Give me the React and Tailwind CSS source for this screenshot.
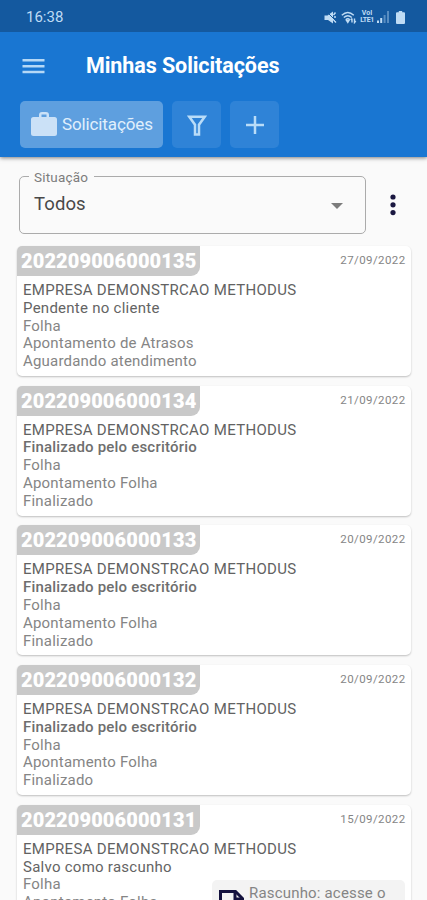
const requests = [
  { id: '202209006000135', date: '27/09/2022', status: 'Pendente no cliente', type: 'Apontamento de Atrasos', step: 'Aguardando atendimento' },
  { id: '202209006000134', date: '21/09/2022', status: 'Finalizado pelo escritório', bold: true, type: 'Apontamento Folha', step: 'Finalizado' },
  { id: '202209006000133', date: '20/09/2022', status: 'Finalizado pelo escritório', bold: true, type: 'Apontamento Folha', step: 'Finalizado' },
  { id: '202209006000132', date: '20/09/2022', status: 'Finalizado pelo escritório', bold: true, type: 'Apontamento Folha', step: 'Finalizado' },
  { id: '202209006000131', date: '15/09/2022', status: 'Salvo como rascunho', type: 'Apontamento Folha', step: 'Rascunho', draft: true },
];

function StatusBar() {
  return (
    <div className="flex h-8 items-center bg-[#14599f] pl-[26px] pr-[22px] pt-0.5 text-[#bfdcf5]">
      <span className="text-[15px]">16:38</span>
      <div className="ml-auto flex items-center">
        <svg className="h-[13px] w-[13px]" viewBox="0 0 13 13" fill="currentColor">
          <path d="M0.500 4.500h3L9 .500v12L4 9h-3.500z" />
          <path d="M8 7l4 4.500M9.500 4l2-2.500M10 6h2" stroke="currentColor" strokeWidth="1.500" />
          <path d="M2.500 .500l10 10" stroke="#14599f" strokeWidth="1" />
        </svg>
        <svg className="ml-1 h-[13px] w-4" viewBox="0 0 16 13" fill="none" stroke="currentColor" strokeWidth="1.400">
          <path d="M.800 4.200q6-5.500 12 0M2.800 6.500q4-3.500 8 0M4.800 8.700q2-1.800 4 0" />
          <path d="M5.500 9.500h2.500L6.800 11.500zM11 7.500v4M9.800 9L11 7.500M13.500 7.500v4l1.300-1.500" />
        </svg>
        <div className="ml-[2px] w-4 whitespace-nowrap text-center text-[7px] font-bold leading-[7px]">
          <div>VoI</div>
          <div className="tracking-[-0.4px]">LTE1</div>
        </div>
        <svg className="ml-[2px] h-[12px] w-3" viewBox="0 0 12 12" fill="currentColor">
          <path d="M0 9.500h2V12H0zM3.200 7h2v5h-2z" />
          <path d="M6.600 4h2v8h-2zM10 0h2v12h-2z" opacity=".4" />
        </svg>
        <svg className="ml-[7px] h-[13px] w-[9px]" viewBox="0 0 9 13" fill="currentColor">
          <path d="M2.800 0h3.400v1.300H8q1 0 1 1V12q0 1-1 1H1q-1 0-1-1V2.300q0-1 1-1h1.800z" />
        </svg>
      </div>
    </div>
  );
}

function Header() {
  return (
    <header className="relative z-10 h-[157px] bg-[#1976d2] shadow-[0_1px_4px_rgba(0,0,0,0.5)]">
      <StatusBar />
      <div className="flex h-[69px] items-center pl-[22px]">
        <svg className="mb-[2px] h-4 w-[23px]" viewBox="0 0 23 16" fill="#b5d8f6">
          <path d="M.5 1h22v2.500H.5zM.5 6.900h22v2.500H.5zM.5 12.800h22v2.500H.5z" />
        </svg>
        <h1 className="ml-[41px] text-[21.5px] font-bold tracking-[-0.08px] text-white">Minhas Solicitações</h1>
      </div>
      <div className="flex gap-[9px] pl-5">
        <button className="flex h-[47px] w-[143px] items-center rounded-[5px] bg-[#5e9fdf] pl-[11px] text-[#e0effc]">
          <svg className="h-[25px] w-[26px] shrink-0" viewBox="0 0 26 25" fill="#cbe1f7">
            <path fillRule="evenodd" d="M8 5V3q0-3 3-3h4q3 0 3 3v2h5.500Q26 5 26 7.500v14Q26 24 23.500 24h-21Q0 24 0 21.500v-14Q0 5 2.500 5zM10.500 5h5V2.500h-5z" />
          </svg>
          <span className="ml-[5px] text-[17px] tracking-[-0.12px]">Solicitações</span>
        </button>
        <button className="flex h-[47px] w-[49px] items-center justify-center rounded-[5px] bg-[#2f83d7]">
          <svg className="mt-[1px] h-[21px] w-[20px]" viewBox="0 0 20 21" fill="none" stroke="#b9dcf8" strokeWidth="2.5">
            <path d="M2.300 1.700h15.400l-5.700 8v9.800H8V9.700z" />
          </svg>
        </button>
        <button className="flex h-[47px] w-[49px] items-center justify-center rounded-[5px] bg-[#2f83d7]">
          <svg className="mt-[1px] h-[18px] w-[18px]" viewBox="0 0 18 18" stroke="#b9dcf8" strokeWidth="2.5">
            <path d="M0 9h18M9 0v18" />
          </svg>
        </button>
      </div>
    </header>
  );
}

function StatusFilter() {
  return (
    <div className="flex pl-[19px] pt-[19px]">
      <div className="relative flex h-[58px] w-[347px] items-center rounded-[5px] border border-[#ababab] pl-[14px] pr-[22px]">
        <span className="absolute left-[9px] top-[-8px] bg-[#fafafa] px-[5px] pr-[6px] text-[13.5px] leading-4 tracking-[0.2px] text-[#7d7d7d]">Situação</span>
        <span className="text-[18.5px] tracking-[0.1px] text-[#484848]">Todos</span>
        <svg className="ml-auto mt-[2px] h-[6px] w-[12px]" viewBox="0 0 12 6" fill="#7c7c7c"><path d="M0 0h12L6 6z" /></svg>
      </div>
      <svg className="ml-[24px] mt-[18px] h-[22px] w-[6px]" viewBox="0 0 6 22" fill="#1a1740">
        <circle cx="3" cy="3" r="2.6" /><circle cx="3" cy="10.8" r="2.6" /><circle cx="3" cy="18.6" r="2.6" />
      </svg>
    </div>
  );
}

function RequestCard({ request }) {
  return (
    <article className="relative h-[130px] shrink-0 rounded-[5px] bg-white shadow-[0_1px_2px_rgba(0,0,0,0.24)]">
      <div className="flex justify-between">
        <div className="flex h-[30px] w-[183px] items-center rounded-br-[9px] rounded-tl-[5px] bg-[#c9c9c9] pl-[4px] text-[20px] font-black tracking-[0.1px] text-white">{request.id}</div>
        <time className="pr-[5.5px] pt-[6px] text-[11.5px] leading-[17px] tracking-[0.4px] text-[#858585]">{request.date}</time>
      </div>
      <div className="whitespace-nowrap pl-[6px] pt-[6px] text-[15px] leading-[17.8px] tracking-[0.2px] text-[#858585]">
        <p className="tracking-[0.32px] text-[#626262]">EMPRESA DEMONSTRCAO METHODUS</p>
        <p className={request.bold ? 'font-medium tracking-[0.2px] text-[#6e6e6e]' : 'tracking-[0.26px] text-[#646464]'}>{request.status}</p>
        <p>Folha</p>
        <p>{request.type}</p>
        <p>{request.step}</p>
      </div>
      {request.draft && (
        <div className="absolute left-[195px] top-[75px] flex h-[45px] w-[193px] rounded-[5px] bg-[#f3f3f3] pl-[7px] pt-[4px]">
          <svg className="mt-[6px] h-[28px] w-[25px] shrink-0" viewBox="0 0 25 28" fill="none" stroke="#14123e" strokeWidth="3">
            <path d="M1.500 26.500v-25h15l7 7v18z" />
            <path d="M16 2v7h7" />
          </svg>
          <span className="ml-[5px] text-[15px] leading-[18px] tracking-[0.18px] text-[#858585]">Rascunho: acesse o</span>
        </div>
      )}
    </article>
  );
}

export default function App() {
  return (
    <div className="h-[900px] w-[427px] overflow-hidden bg-[#fafafa] font-['Roboto',sans-serif]">
      <Header />
      <StatusFilter />
      <main className="flex flex-col gap-[9.7px] pl-[17px] pr-4 pt-[12px]">
        {requests.map((request) => <RequestCard key={request.id} request={request} />)}
      </main>
    </div>
  );
}
